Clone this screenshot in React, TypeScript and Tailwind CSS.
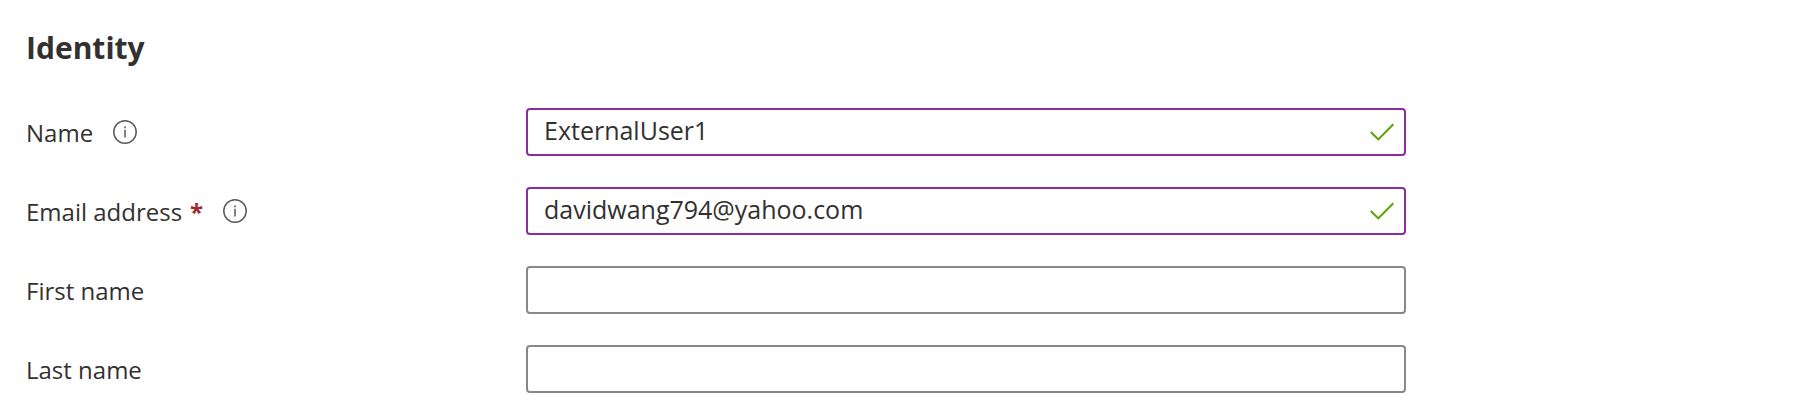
import { useId, useState } from 'react';

type FieldProps = {
  label: string;
  initial?: string;
  type?: string;
  required?: boolean;
  info?: boolean;
};

function InfoIcon() {
  return (
    <svg viewBox="0 0 24 24" className="size-6" fill="none" stroke="#5c5a58" aria-hidden="true">
      <circle cx="12" cy="12" r="11.2" strokeWidth="1.5" />
      <path d="M12 9.8V17.4" strokeWidth="1.5" />
      <path d="M12 6.6V8.2" strokeWidth="1.7" />
    </svg>
  );
}

function CheckIcon() {
  return (
    <svg
      viewBox="0 0 24 18"
      className="pointer-events-none absolute right-3 h-[18px] w-6"
      fill="none"
      stroke="#57a300"
      strokeWidth="2"
      aria-hidden="true"
    >
      <path d="M0.8 9L8.3 16.4L23.3 1.2" />
    </svg>
  );
}

function Field({ label, initial = '', type = 'text', required, info }: FieldProps) {
  const id = useId();
  const [value, setValue] = useState(initial);
  const filled = value !== '';
  return (
    <div className="flex items-center">
      <div className="flex w-[500px] shrink-0 items-center gap-5">
        <label htmlFor={id} className="flex gap-2 pt-0.5 text-2xl leading-8">
          {label}
          {required && <span className="font-bold text-[#a4262c]">*</span>}
        </label>
        {info && (
          <button type="button" aria-label={`About ${label}`}>
            <InfoIcon />
          </button>
        )}
      </div>
      <div className="relative flex max-w-[880px] flex-1 items-center">
        <input
          id={id}
          type={type}
          required={required}
          value={value}
          onChange={(e) => setValue(e.target.value)}
          className={`h-12 w-full rounded-[4px] border-2 bg-white pr-12 pb-1 pl-4 text-[25px] outline-none ${
            filled ? 'border-[#8a2da5]' : 'border-[#8a8886]'
          }`}
        />
        {filled && <CheckIcon />}
      </div>
    </div>
  );
}

export default function App() {
  return (
    <main className="bg-white px-[26px] pt-7 pb-7 font-['Open_Sans',sans-serif] text-[#323130]">
      <h1 className="text-[30px] leading-10 font-bold">Identity</h1>
      <form className="mt-10 flex flex-col gap-[31px]">
        <Field label="Name" initial="ExternalUser1" info />
        <Field label="Email address" type="email" initial="davidwang794@yahoo.com" required info />
        <Field label="First name" />
        <Field label="Last name" />
      </form>
    </main>
  );
}
